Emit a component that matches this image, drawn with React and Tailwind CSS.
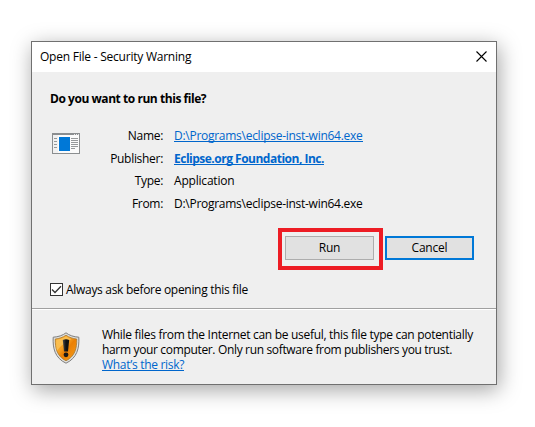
function FileIcon() {
  return (
    <svg width="28" height="21" viewBox="0 0 28 21" shapeRendering="crispEdges" className="block">
      <rect width="28" height="21" fill="#8b8e90" />
      <rect x="1" y="2" width="26" height="18" fill="#fbfbfb" />
      <rect x="1" y="2" width="5" height="18" fill="#f1f1f1" />
      <path d="M22 1h1M24 1h1M26 1h1" stroke="#e8e8e8" strokeWidth="1" transform="translate(0 .5)" />
      <rect x="7" y="4" width="11" height="14" fill="#0078d7" />
      <path d="M2 5.5h3M2 8.5h3M2 11.5h3M2 14.5h3M19 5.5h7M19 7.5h7M19 9.5h7M19 11.5h7M19 13.5h7M19 15.5h4" stroke="#96999b" />
    </svg>
  );
}

function ShieldIcon() {
  return (
    <svg width="28" height="32" viewBox="0 0 28 32" className="block">
      <defs>
        <linearGradient id="gold" x1="0" y1="0" x2="1" y2="1">
          <stop offset="0" stopColor="#f7a51e" />
          <stop offset=".4" stopColor="#f6a021" />
          <stop offset=".55" stopColor="#ea7f04" />
          <stop offset="1" stopColor="#f6a01c" />
        </linearGradient>
        <linearGradient id="mark" x1="0" y1="0" x2="1" y2="0">
          <stop offset="0" stopColor="#4a4a4a" />
          <stop offset=".5" stopColor="#111" />
        </linearGradient>
      </defs>
      <path d="M14 .8C11 3.3 6 5 1.2 5.2C.6 16 2.8 26 14 31.2C25.2 26 27.4 16 26.8 5.2C22 5 17 3.3 14 .8Z" fill="#e0e0de" stroke="#7e7e7e" />
      <path d="M14 3.2C11 5.3 7 6.7 3.3 7C3 16 5 24.5 14 28.8C23 24.5 25 16 24.7 7C21 6.7 17 5.3 14 3.2Z" fill="url(#gold)" stroke="#a8782f" strokeWidth=".8" />
      <path d="M4.2 7.8C8 7.3 11.5 6 14 4.3C16.500 6 18 6.700 19.500 7C15 9 8 14 5 19C4 15 4 11 4.2 7.8Z" fill="#ffe08a" opacity=".45" />
      <path d="M10.800 8Q14 6.7 17.200 8L16 19.500H12Z" fill="url(#mark)" />
      <circle cx="14" cy="22.8" r="2.4" fill="#171717" />
    </svg>
  );
}

function Link({ children, className = "" }) {
  return (
    <a className={"h-[14px] border-b border-[#0066cc] text-[#0066cc] " + className}>{children}</a>
  );
}

function Row({ label, top, children }) {
  return (
    <div className={"flex h-4 " + top}>
      <div className="flex w-[83px] justify-end">
        <span className="tracking-[-0.3px]">{label}</span>
      </div>
      <div className="ml-[11px] flex h-[14px] items-start">{children}</div>
    </div>
  );
}

export default function App() {
  return (
    <div className="h-[427px] w-[535px] overflow-hidden bg-white pt-[41px] pl-[31px] font-['Open_Sans','Noto_Sans',sans-serif] text-[12px] leading-4 whitespace-nowrap text-black">
      <div className="flex h-[344px] w-[466px] flex-col border border-[#707070] bg-[#efefef] shadow-[2px_5px_20px_0_rgba(0,0,0,0.36)]">
        <div className="flex h-[30px] shrink-0 justify-between bg-white pt-[7px] pr-[9px] pl-[8px]">
          <span className="tracking-[-0.23px]">Open File - Security Warning</span>
          <svg width="11" height="11" viewBox="0 0 11 11" className="mt-[2px]">
            <path d="M.5 .5L10.5 10.5M10.5 .5L.5 10.5" stroke="#000" strokeWidth="1.1" />
          </svg>
        </div>
        <div className="h-[237px] shrink-0 border-b border-[#a0a0a0] pl-[18px]">
          <div className="pt-[19px] font-bold tracking-[-0.45px]">Do you want to run this file?</div>
          <div className="flex h-[93px]">
            <div className="w-[30px] pt-[26px] pl-[2px]"><FileIcon /></div>
            <div>
              <Row label="Name:" top="mt-[21px]">
                <Link className="tracking-[-0.27px]">D:\Programs\eclipse-inst-win64.exe</Link>
              </Row>
              <Row label="Publisher:" top="mt-[7px]">
                <Link className="font-bold tracking-[-0.5px]">Eclipse.org Foundation, Inc.</Link>
              </Row>
              <Row label="Type:" top="mt-[6px]">
                <span className="tracking-[-0.2px]">Application</span>
              </Row>
              <Row label="From:" top="mt-[7px]">
                <span className="tracking-[-0.27px]">D:\Programs\eclipse-inst-win64.exe</span>
              </Row>
            </div>
          </div>
          <div className="mt-[28px] ml-[228px] flex">
            <div className="h-[42px] w-[105px] border-4 border-[#ed1c24] pt-[4px] pl-[3px]">
              <button className="block h-6 w-[89px] border border-[#adadad] bg-[#e1e1e1] leading-[22px] tracking-[-0.2px]">Run</button>
            </div>
            <button className="mt-[8px] ml-[2px] block h-6 w-[89px] border-2 border-[#0078d7] bg-[#e1e1e1] leading-5 tracking-[-0.2px]">Cancel</button>
          </div>
          <div className="mt-[12px] flex">
            <div className="mt-[1px] h-[13px] w-[13px] border border-[#333] bg-white">
              <svg width="11" height="11" viewBox="0 0 11 11" className="block">
                <path d="M1 5.5L4 8.5L10 2.3" fill="none" stroke="#333" strokeWidth="1.3" />
              </svg>
            </div>
            <span className="ml-[3px] tracking-[-0.3px]">Always ask before opening this file</span>
          </div>
        </div>
        <div className="flex flex-1 border-t border-white pl-[20px]">
          <div className="pt-[22px]"><ShieldIcon /></div>
          <div className="flex flex-col items-start pt-[17px] pl-[22px] leading-[15px]">
            <span className="tracking-[-0.3px]">While files from the Internet can be useful, this file type can potentially</span>
            <span className="tracking-[-0.34px]">harm your computer. Only run software from publishers you trust.</span>
            <Link className="tracking-[-0.3px]">What’s the risk?</Link>
          </div>
        </div>
      </div>
    </div>
  );
}
